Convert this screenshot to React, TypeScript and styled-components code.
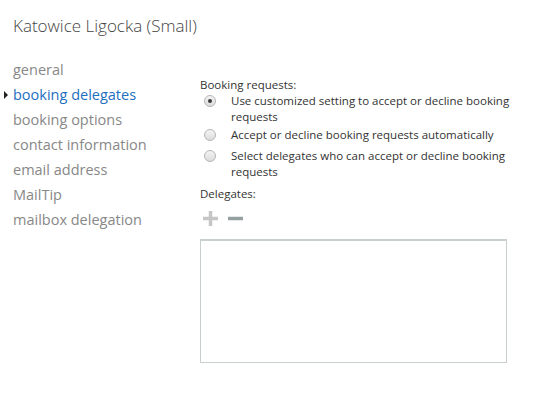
import { FunctionComponent } from 'react'
import styled, { createGlobalStyle } from 'styled-components'

const GlobalStyle = createGlobalStyle`
  body {
    margin: 0;
    background: #fff;
    font-family: "Segoe UI", "Open Sans", "Noto Sans", sans-serif;
  }
`

const Page = styled.div`
  width: 540px;
  height: 393px;
  overflow: hidden;
`

const Title = styled.h1`
  margin: 0;
  padding: 14px 0 0 13px;
  height: 57px;
  box-sizing: border-box;
  font-size: 17px;
  font-weight: 300;
  color: #444;
`

const Body = styled.div`
  display: flex;
`

const Nav = styled.ul`
  list-style: none;
  margin: 0;
  padding: 0;
  width: 200px;
  flex: none;
`

const NavItem = styled.li<{ $active?: boolean }>`
  position: relative;
  padding-left: 13px;
  height: 25px;
  line-height: 25px;
  font-size: 14.5px;
  color: ${p => (p.$active ? '#1e6fc0' : '#888')};

  ${p =>
    p.$active &&
    `&::before {
      content: '';
      position: absolute;
      left: 4px;
      top: 9px;
      border-left: 4px solid #222;
      border-top: 4px solid transparent;
      border-bottom: 4px solid transparent;
    }`}
`

const Panel = styled.div`
  padding-top: 20px;
  font-size: 11.5px;
  color: #333;
`

const Label = styled.div`
  line-height: 16px;
`

const RadioList = styled.div`
  display: flex;
  flex-direction: column;
  gap: 2px;
`

const RadioRow = styled.label`
  display: flex;
  align-items: flex-start;
  width: 312px;
  min-height: 19px;
  line-height: 16px;
  color: #333;
`

const RadioDot = styled.span<{ $checked?: boolean }>`
  flex: none;
  position: relative;
  width: 12px;
  height: 12px;
  margin: 2px 15px 0 4px;
  border-radius: 50%;
  border: 1px solid #b5b5b5;
  box-sizing: border-box;
  background: linear-gradient(#f4f4f4, #dcdcdc);

  ${p =>
    p.$checked &&
    `&::after {
      content: '';
      position: absolute;
      left: 3px;
      top: 3px;
      width: 4px;
      height: 4px;
      border-radius: 50%;
      background: #3a3a3a;
    }`}
`

const Delegates = styled(Label)`
  margin-top: 6px;
`

const Tools = styled.div`
  display: flex;
  align-items: center;
  gap: 10px;
  padding: 9px 0 13px 3px;
`

const ListBox = styled.div`
  width: 307px;
  height: 124px;
  box-sizing: border-box;
  border: 1px solid #c9cfcf;
  border-top-width: 2px;
`

const PlusIcon: FunctionComponent = () => (
  <svg width="15" height="15" viewBox="0 0 15 15">
    <path d="M7.5 0v15M0 7.5h15" stroke="#c6c6c6" strokeWidth="3.5" />
  </svg>
)

const MinusIcon: FunctionComponent = () => (
  <svg width="15" height="15" viewBox="0 0 15 15">
    <path d="M0 7.5h15" stroke="#95a0a0" strokeWidth="3.5" />
  </svg>
)

const navItems = [
  'general',
  'booking delegates',
  'booking options',
  'contact information',
  'email address',
  'MailTip',
  'mailbox delegation',
]

const options = [
  { text: 'Use customized setting to accept or decline booking requests', checked: true },
  { text: 'Accept or decline booking requests automatically', checked: false },
  { text: 'Select delegates who can accept or decline booking requests', checked: false },
]

export default function App() {
  return (
    <Page>
      <GlobalStyle />
      <Title>Katowice Ligocka (Small)</Title>
      <Body>
        <Nav>
          {navItems.map(item => (
            <NavItem key={item} $active={item === 'booking delegates'}>
              {item}
            </NavItem>
          ))}
        </Nav>
        <Panel>
          <Label>Booking requests:</Label>
          <RadioList>
            {options.map(o => (
              <RadioRow key={o.text}>
                <RadioDot $checked={o.checked} />
                <span>{o.text}</span>
              </RadioRow>
            ))}
          </RadioList>
          <Delegates>Delegates:</Delegates>
          <Tools>
            <PlusIcon />
            <MinusIcon />
          </Tools>
          <ListBox />
        </Panel>
      </Body>
    </Page>
  )
}
